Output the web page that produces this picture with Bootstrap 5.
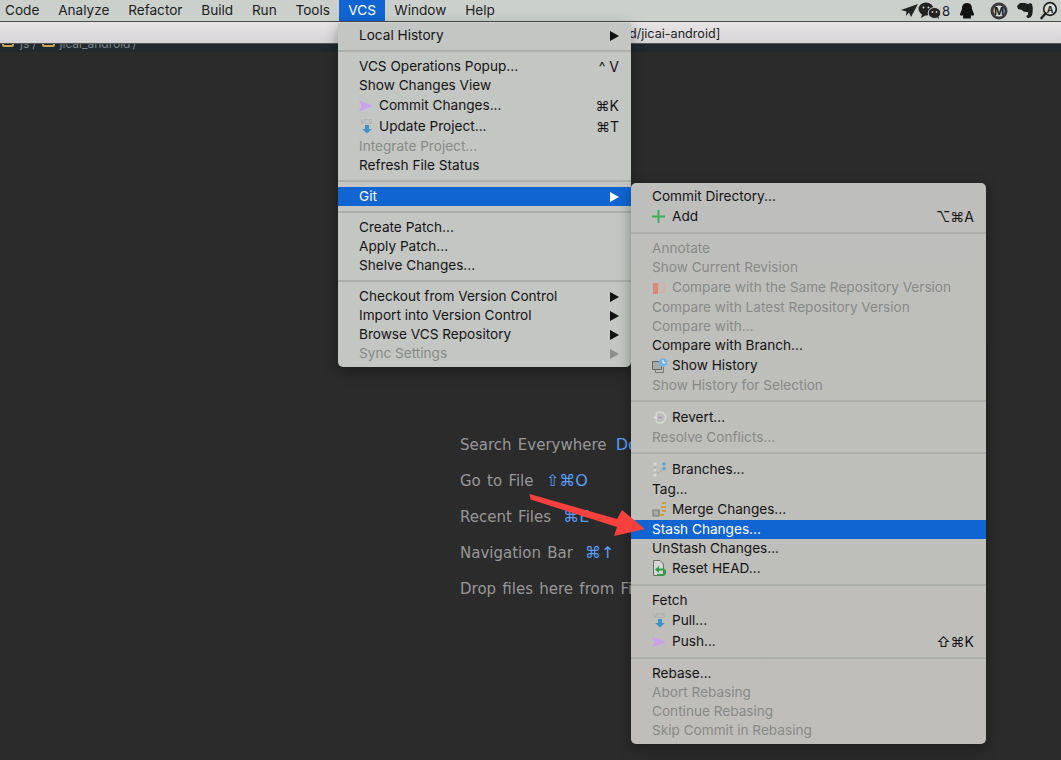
<!doctype html>
<html lang="en">
<head>
<meta charset="utf-8">
<title>VCS menu</title>
<link rel="stylesheet" href="https://cdn.jsdelivr.net/npm/bootstrap@5.3.0/dist/css/bootstrap.min.css">
<style>
html,body{height:760px;overflow:hidden}
body{background:#2b2b2b;font-family:"Inter","Liberation Sans",sans-serif;font-size:13.62px;color:#141414}
.shot{height:760px;overflow:hidden}
.macbar{height:22px;background:#cbd0cd;border-bottom:1px solid #4a4d4d;font-size:13.6px;color:#202020}
.macitem{padding:0 9.4px;height:21px;line-height:21px}
.macitem:first-child{margin-left:-4.4px}
.macitem-on{background:#1065d2;color:#fff;padding:0 9px}
.trayicons{height:21px}
.wintitle{height:22px;background:linear-gradient(#e6e4e5,#d6d4d6);border-bottom:1px solid #55585a;padding-left:629px;line-height:23px;font-size:12.6px;color:#222}
.crumbs{height:8px;background:#1f2a2e;overflow:hidden;color:#7c8588;font-size:12px;padding-left:2px}
.crumb-in{height:14px;margin-top:-11px}
.crumb-in span:not(.folder){line-height:12px;margin-bottom:-3px}
.folder{width:12px;height:9px;border:2px solid #c9a25c;border-radius:2px;flex:none}
.folder-two{width:13px;margin-left:5px;margin-right:5px}
.crumb-js{margin-left:6px;margin-right:3px}
.crumb-end{margin-left:2px}
.editorpane{height:708px;padding:375px 0 0 460px;color:#979797;font-family:"DejaVu Sans",sans-serif;font-size:15px;white-space:nowrap;overflow:hidden;word-spacing:1.5px}
.hintline{height:36px;line-height:36px}
.hintkey{color:#589df6;margin-left:6px;font-size:16px;word-spacing:0}
.hintkey-near{margin-left:3px}
.popmenu{position:absolute;border-radius:0 0 5px 5px;box-shadow:0 4px 14px rgba(0,0,0,.35);z-index:5;padding-bottom:4px;white-space:nowrap}
.popvcs{left:338px;top:23px;width:293px;padding-top:3px;background:#c4c6c4}
.popgit{left:631px;top:183px;width:355px;padding-top:4px;background:linear-gradient(#bebfbc,#bfbebb);border-radius:5px;z-index:6}
.mrow{height:19px;line-height:19px;padding:0 12px 0 21px}
.mrow-tall{height:21px;line-height:21px}
.mrow-on{background:#1065d2;color:#fff}
.mrow-off{color:#888a88}
.msep{height:12px;padding-top:5px}
.msep::before{content:"";display:block;height:2px;background:#adafad}
.micon{width:20px;flex:none;display:flex;align-items:center}
.mkeys{margin-left:auto;font-size:14px}
.mtri{margin-left:auto;width:0;height:0;border-left:9px solid #111;border-top:5px solid transparent;border-bottom:5px solid transparent}
.mrow-on .mtri{border-left-color:#fff}
.mrow-off .mtri{border-left-color:#8d8f8d}
.redarrow{position:absolute;left:520px;top:485px;z-index:7}
</style>
</head>
<body>
<div class="shot position-relative">
  <div class="macbar d-flex align-items-start">
    <div class="macitem">Code</div><div class="macitem">Analyze</div><div class="macitem">Refactor</div><div class="macitem">Build</div><div class="macitem">Run</div><div class="macitem">Tools</div><div class="macitem macitem-on">VCS</div><div class="macitem">Window</div><div class="macitem">Help</div>
    <div class="trayicons ms-auto d-flex align-items-center">
      <svg width="160" height="21" viewBox="0 0 160 21">
        <path d="M0 10 17 4 10 17 8 12.5 5 16 5.5 11.5Z" fill="#222"/>
        <ellipse cx="25" cy="9" rx="7.500" ry="6.500" fill="#222"/><path d="M21 14 20 18 25 15Z" fill="#222"/>
        <ellipse cx="33.500" cy="13" rx="6.300" ry="5.500" fill="#222" stroke="#cbd0cd" stroke-width="1"/><path d="M36 17 38 19.500 37 15Z" fill="#222"/>
        <circle cx="22.500" cy="7.500" r="1" fill="#cbd0cd"/><circle cx="27.500" cy="7.500" r="1" fill="#cbd0cd"/><circle cx="31.500" cy="12" r=".9" fill="#cbd0cd"/><circle cx="35.500" cy="12" r=".9" fill="#cbd0cd"/>
        <text x="41" y="16" font-family="Inter" font-size="13" fill="#123">8</text>
        <path d="M66 3C62 3 61 6 61 9L59 14C59 16 60.500 16 61.500 15 62 17 63 18 61.500 18.500H70.500C69 18 70 17 70.500 15 71.500 16 73 16 73 14L71 9C71 6 70 3 66 3Z" fill="#111"/>
        <circle cx="98" cy="11" r="8.500" fill="#3a3a3a"/><circle cx="98" cy="11" r="5.500" fill="#d8dbd9"/>
        <text x="98" y="15" text-anchor="middle" font-family="Inter" font-size="11" font-weight="700" fill="#222">M</text>
        <path d="M119 3H124L127 4 130 3C132 5 132 9 131.500 13 131 17 129 18 127 18 125 18 125 15 127 15L127 12C125 12 122 12 121 10L117 9 116 6Z" fill="#1e1e1e"/>
        <circle cx="149" cy="9" r="6.300" fill="#d8dbd9" stroke="#222" stroke-width="1.700"/>
        <path d="M144.500 13.500 140.500 18" stroke="#222" stroke-width="2.600" stroke-linecap="round"/>
        <text x="149" y="12.500" text-anchor="middle" font-family="Inter" font-size="9" font-weight="700" fill="#222">A</text>
      </svg>
    </div>
  </div>
  <div class="wintitle">d/jicai-android]</div>
  <div class="crumbs">
    <div class="crumb-in d-flex align-items-end">
      <span class="folder"></span><span class="crumb-js">js</span><span>/</span>
      <span class="folder folder-two"></span><span>jicai_android</span><span class="crumb-end">/</span>
    </div>
  </div>
  <div class="editorpane">
    <div class="hintline">Search Everywhere <span class="hintkey hintkey-near">Double Shift</span></div>
    <div class="hintline">Go to File <span class="hintkey">⇧⌘O</span></div>
    <div class="hintline">Recent Files <span class="hintkey">⌘E</span></div>
    <div class="hintline">Navigation Bar <span class="hintkey">⌘↑</span></div>
    <div class="hintline">Drop files here from Finder</div>
  </div>

  <div class="popmenu popvcs">
    <div class="mrow d-flex align-items-center">Local History<span class="mtri"></span></div>
    <div class="msep"></div>
    <div class="mrow d-flex">VCS Operations Popup...<span class="mkeys">^ V</span></div>
    <div class="mrow">Show Changes View</div>
    <div class="mrow mrow-tall d-flex"><span class="micon"><svg width="15" height="12"><path d="M0 .5 14 6 0 11.500 2.500 6Z" fill="#c9a2ee"/></svg></span>Commit Changes...<span class="mkeys">⌘K</span></div>
    <div class="mrow mrow-tall d-flex"><span class="micon"><svg width="16" height="17"><text x="1" y="6" font-family="Inter" font-size="6" fill="#a5a7a5">VCS</text><path d="M6 7H10V11H13L8 15.500 3 11H6Z" fill="#3f93c8"/></svg></span>Update Project...<span class="mkeys">⌘T</span></div>
    <div class="mrow mrow-off">Integrate Project...</div>
    <div class="mrow">Refresh File Status</div>
    <div class="msep"></div>
    <div class="mrow mrow-on d-flex align-items-center">Git<span class="mtri"></span></div>
    <div class="msep"></div>
    <div class="mrow">Create Patch...</div>
    <div class="mrow">Apply Patch...</div>
    <div class="mrow">Shelve Changes...</div>
    <div class="msep"></div>
    <div class="mrow d-flex align-items-center">Checkout from Version Control<span class="mtri"></span></div>
    <div class="mrow d-flex align-items-center">Import into Version Control<span class="mtri"></span></div>
    <div class="mrow d-flex align-items-center">Browse VCS Repository<span class="mtri"></span></div>
    <div class="mrow mrow-off d-flex align-items-center">Sync Settings<span class="mtri"></span></div>
  </div>

  <div class="popmenu popgit">
    <div class="mrow">Commit Directory...</div>
    <div class="mrow mrow-tall d-flex"><span class="micon"><svg width="13" height="13"><path d="M5.500 0H7.500V5.500H13V7.500H7.500V13H5.500V7.500H0V5.500H5.500Z" fill="#3fae5a"/></svg></span>Add<span class="mkeys">⌥⌘A</span></div>
    <div class="msep"></div>
    <div class="mrow mrow-off">Annotate</div>
    <div class="mrow mrow-off">Show Current Revision</div>
    <div class="mrow mrow-tall mrow-off d-flex"><span class="micon"><svg width="13" height="13"><path d="M1 2H6V13H1Z" fill="#d98a78"/><path d="M7 0V13M9 2H12V11H9" stroke="#d6a79a" fill="none"/></svg></span>Compare with the Same Repository Version</div>
    <div class="mrow mrow-off">Compare with Latest Repository Version</div>
    <div class="mrow mrow-off">Compare with...</div>
    <div class="mrow">Compare with Branch...</div>
    <div class="mrow mrow-tall d-flex"><span class="micon"><svg width="16" height="15"><path d="M.5 3.500H9.500V11.500H.5Z" fill="#a8aaa8" stroke="#666"/><path d="M3.500 11.500V14.500H11.500V9" fill="none" stroke="#777"/><circle cx="11" cy="4.500" r="4.200" fill="#6cb3e6"/><path d="M11 2V4.800H13.500" stroke="#fff" fill="none"/></svg></span>Show History</div>
    <div class="mrow mrow-off">Show History for Selection</div>
    <div class="msep"></div>
    <div class="mrow mrow-tall d-flex"><span class="micon"><svg width="15" height="15"><path d="M3.500 4.500A5.500 5.500 0 1 1 3.500 10.500" fill="none" stroke="#d7d8d6" stroke-width="1.600"/><path d="M1 7.500 5 4.500V10.500Z" fill="#d7d8d6"/><path d="M6.500 7.500H10" stroke="#b58ad6" stroke-width="1.500"/></svg></span>Revert...</div>
    <div class="mrow mrow-off">Resolve Conflicts...</div>
    <div class="msep"></div>
    <div class="mrow mrow-tall d-flex"><span class="micon"><svg width="15" height="15"><path d="M3 2V13M3 13 12 7" stroke="#8f918f" stroke-dasharray="1.500 1.500" fill="none"/><circle cx="3" cy="2" r="1.700" fill="#d8d8d6"/><circle cx="12" cy="2" r="1.800" fill="#5fa4d0"/><circle cx="12" cy="6.500" r="1.800" fill="#5fa4d0"/><circle cx="3" cy="8" r="1.500" fill="#d8d8d6"/><circle cx="3" cy="13" r="1.700" fill="#d8d8d6"/></svg></span>Branches...</div>
    <div class="mrow">Tag...</div>
    <div class="mrow mrow-tall d-flex"><span class="micon"><svg width="15" height="15"><path d="M1 8H7V14H1Z" fill="#a9aba9" stroke="#7d7f7d" stroke-width="1.200"/><path d="M10 0H14V2H10ZM9 4H14V6H9ZM10 8H14V10H10ZM8 12H12V14H8Z" fill="#d59a3c"/></svg></span>Merge Changes...</div>
    <div class="mrow mrow-on">Stash Changes...</div>
    <div class="mrow">UnStash Changes...</div>
    <div class="mrow mrow-tall d-flex"><span class="micon"><svg width="15" height="17"><path d="M1.500 .5H8L11.500 4V15.500H1.500Z" fill="#d5d5d3" stroke="#6d6f6d"/><path d="M6 9.500H11C14 9.500 14 15 10.500 15H5" fill="none" stroke="#2f9e44" stroke-width="2"/><path d="M7 6 3 9.500 7 13Z" fill="#2f9e44"/></svg></span>Reset HEAD...</div>
    <div class="msep"></div>
    <div class="mrow">Fetch</div>
    <div class="mrow mrow-tall d-flex"><span class="micon"><svg width="16" height="17"><text x="1" y="6" font-family="Inter" font-size="6" fill="#a5a7a5">VCS</text><path d="M6 7H10V11H13L8 15.500 3 11H6Z" fill="#3f93c8"/></svg></span>Pull...</div>
    <div class="mrow mrow-tall d-flex"><span class="micon"><svg width="15" height="12"><path d="M0 .5 14 6 0 11.500 2.500 6Z" fill="#c9a2ee"/></svg></span>Push...<span class="mkeys">⇧⌘K</span></div>
    <div class="msep"></div>
    <div class="mrow">Rebase...</div>
    <div class="mrow mrow-off">Abort Rebasing</div>
    <div class="mrow mrow-off">Continue Rebasing</div>
    <div class="mrow mrow-off">Skip Commit in Rebasing</div>
  </div>

  <svg class="redarrow" width="135" height="65" viewBox="0 0 135 65"><path d="M9.500 9 10.500 14.500 97 42 94 51 125 44 102 25 97 34Z" fill="#f8403c"/></svg>
</div>
<script src="https://cdn.jsdelivr.net/npm/bootstrap@5.3.0/dist/js/bootstrap.bundle.min.js"></script>
</body>
</html>
